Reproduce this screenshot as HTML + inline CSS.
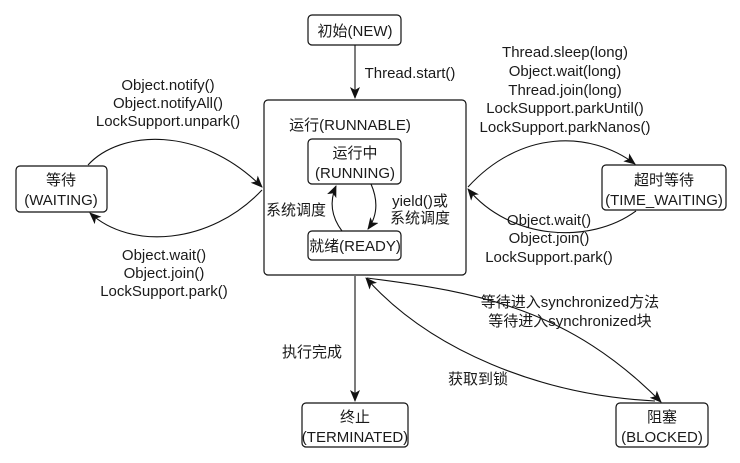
<!DOCTYPE html>
<html><head><meta charset="utf-8"><style>
html,body{margin:0;padding:0;background:#fff;}
svg{display:block}
text{font-family:"Liberation Sans","Noto Sans CJK SC",sans-serif;font-size:15px;fill:#1a1a1a;text-anchor:middle}
.b{fill:#fff;stroke:#111;stroke-width:1.2}
.l{fill:none;stroke:#111;stroke-width:1.1}
</style></head><body>
<svg width="740" height="463" viewBox="0 0 740 463">
<defs><marker id="a" markerWidth="12" markerHeight="10" refX="11" refY="5" orient="auto" markerUnits="userSpaceOnUse"><path d="M0,0 L12,5 L0,10 L3,5 z" fill="#111"/></marker></defs>
<rect class="b" x="308" y="15" width="93" height="30" rx="4"/>
<text x="355" y="36">初始(NEW)</text>
<path class="l" d="M355,45 L355,98" marker-end="url(#a)"/>
<text x="410" y="78">Thread.start()</text>
<rect class="b" x="264" y="100" width="202" height="175" rx="4"/>
<text x="350" y="130">运行(RUNNABLE)</text>
<rect class="b" x="308" y="139" width="93" height="45" rx="4"/>
<text x="355" y="158">运行中</text>
<text x="355" y="178">(RUNNING)</text>
<rect class="b" x="308" y="231" width="93" height="29" rx="4"/>
<text x="355" y="251">就绪(READY)</text>
<path class="l" d="M342,231 C330,215 330,200 336,186" marker-end="url(#a)"/>
<path class="l" d="M371,184 C378,200 378,215 368,229" marker-end="url(#a)"/>
<text x="296" y="215">系统调度</text>
<text x="420" y="206">yield()或</text>
<text x="420" y="223">系统调度</text>
<rect class="b" x="16" y="166" width="91" height="46" rx="4"/>
<text x="61" y="185">等待</text>
<text x="61" y="205">(WAITING)</text>
<path class="l" d="M88,165 C120,130 200,125 262,187" marker-end="url(#a)"/>
<path class="l" d="M262,190 C210,245 130,250 90,213" marker-end="url(#a)"/>
<text x="168" y="90">Object.notify()</text>
<text x="168" y="108">Object.notifyAll()</text>
<text x="168" y="126">LockSupport.unpark()</text>
<text x="164" y="260">Object.wait()</text>
<text x="164" y="278">Object.join()</text>
<text x="164" y="296">LockSupport.park()</text>
<rect class="b" x="602" y="165" width="124" height="45" rx="4"/>
<text x="664" y="185">超时等待</text>
<text x="664" y="205">(TIME_WAITING)</text>
<path class="l" d="M468,187 C520,130 590,130 635,164" marker-end="url(#a)"/>
<path class="l" d="M636,211 C590,245 510,240 468,189" marker-end="url(#a)"/>
<text x="565" y="57">Thread.sleep(long)</text>
<text x="565" y="76">Object.wait(long)</text>
<text x="565" y="95">Thread.join(long)</text>
<text x="565" y="113">LockSupport.parkUntil()</text>
<text x="565" y="132">LockSupport.parkNanos()</text>
<text x="549" y="225">Object.wait()</text>
<text x="549" y="243">Object.join()</text>
<text x="549" y="262">LockSupport.park()</text>
<rect class="b" x="302" y="403" width="106" height="44" rx="4"/>
<text x="355" y="422">终止</text>
<text x="355" y="442">(TERMINATED)</text>
<path class="l" d="M355,276 L355,401" marker-end="url(#a)"/>
<text x="312" y="357">执行完成</text>
<rect class="b" x="616" y="403" width="92" height="44" rx="4"/>
<text x="662" y="422">阻塞</text>
<text x="662" y="442">(BLOCKED)</text>
<path class="l" d="M367,278 C480,292 570,310 661,402" marker-end="url(#a)"/>
<path class="l" d="M655,401 C540,395 430,350 366,278" marker-end="url(#a)"/>
<text x="570" y="307">等待进入synchronized方法</text>
<text x="570" y="326">等待进入synchronized块</text>
<text x="478" y="384">获取到锁</text>
</svg>
</body></html>
